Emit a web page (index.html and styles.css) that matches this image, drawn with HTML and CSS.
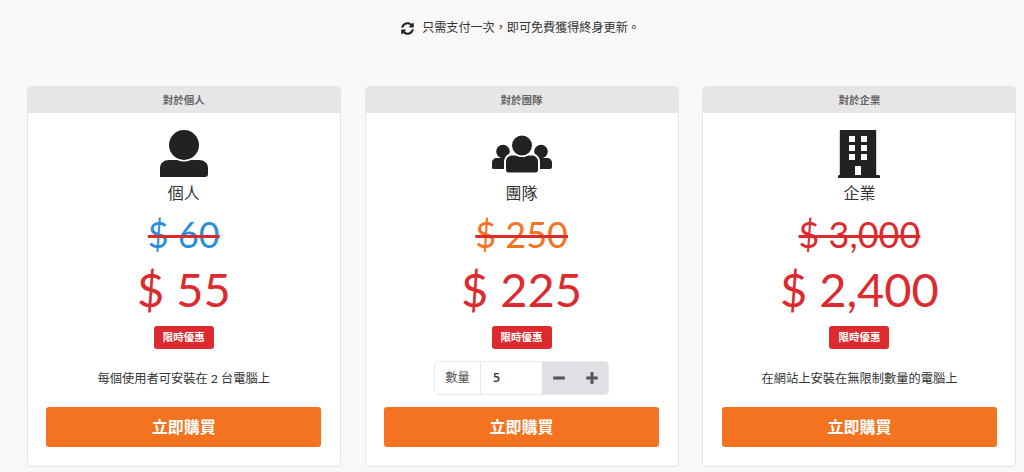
FILE: index.html
```html
<!DOCTYPE html>
<html>
    <head>
        <meta charset="utf-8"/>
        <link rel="stylesheet" href="styles.css">
    </head>
    <body>
        <p class="note">
            <svg class="note-icon" viewBox="0 0 512 512"><path d="M370.72 133.28C339.458 104.008 298.888 87.962 255.848 88c-77.458.068-144.328 53.178-162.791 126.85-1.344 5.363-6.122 9.15-11.651 9.15H24.103c-7.498 0-13.194-6.807-11.807-14.176C33.933 94.924 134.813 8 256 8c66.448 0 126.791 26.136 171.315 68.685L463.03 40.97C478.149 25.851 504 36.559 504 57.941V192c0 13.255-10.745 24-24 24H345.941c-21.382 0-32.09-25.851-16.971-40.971l41.75-41.749zM32 296h134.059c21.382 0 32.09 25.851 16.971 40.971l-41.75 41.75c31.262 29.273 71.835 45.319 114.876 45.28 77.418-.07 144.315-53.144 162.787-126.849 1.344-5.363 6.122-9.15 11.651-9.15h57.304c7.498 0 13.194 6.807 11.807 14.176C478.067 417.076 377.187 504 256 504c-66.448 0-126.791-26.136-171.315-68.685L48.97 471.03C33.851 486.149 8 475.441 8 454.059V320c0-13.255 10.745-24 24-24z"/></svg>
            只需支付一次，即可免費獲得終身更新。
        </p>

        <main class="plans">
            <section class="card">
                <div class="card-header">對於個人</div>
                <div class="card-body">
                    <svg class="plan-icon" viewBox="0 0 60 48">
                        <path d="M6 47V38C6 33 10 30 15 30H45C50 30 54 33 54 38V44C54 46 53 47 51 47Z"/>
                        <circle class="cut" cx="30" cy="15" r="16.5"/>
                        <circle cx="30" cy="15" r="15"/>
                    </svg>
                    <h2 class="plan-name">個人</h2>
                    <div class="old-price blue">$ 60</div>
                    <div class="new-price">$ 55</div>
                    <span class="badge">限時優惠</span>
                    <div class="plan-detail">每個使用者可安裝在 2 台電腦上</div>
                    <a class="buy">立即購買</a>
                </div>
            </section>

            <section class="card">
                <div class="card-header">對於團隊</div>
                <div class="card-body">
                    <svg class="plan-icon" viewBox="0 0 60 48">
                        <circle cx="11" cy="21.5" r="6.8"/>
                        <circle cx="49" cy="21.5" r="6.8"/>
                        <path d="M0 39V33C0 30 2 28 5 28H17C20 28 22 30 22 33V39H3C1 39 0 38.500 0 39Z"/>
                        <path d="M38 28H55C58 28 60 30 60 33V37C60 38 59 39 58 39H38Z"/>
                        <path class="cut" d="M12 44V32C12 27 16 23 21 23H39C44 23 48 27 48 32V44Z"/>
                        <path d="M14 40V31C14 28 17 25.500 20 25.500H40C43 25.500 46 28 46 31V40C46 41.500 45 42.500 43.500 42.500H16.500C15 42.500 14 41.500 14 40Z"/>
                        <circle class="cut" cx="30" cy="15.500" r="11.500"/>
                        <circle cx="30" cy="15.500" r="10"/>
                    </svg>
                    <h2 class="plan-name">團隊</h2>
                    <div class="old-price orange">$ 250</div>
                    <div class="new-price">$ 225</div>
                    <span class="badge">限時優惠</span>
                    <div class="plan-detail">
                        <div class="qty">
                            <span class="qty-label">數量</span>
                            <span class="qty-value">5</span>
                            <span class="qty-buttons">
                                <svg viewBox="0 0 12 12"><rect x="1" y="4.700" width="10" height="2.600"/></svg>
                                <svg viewBox="0 0 12 12"><rect x="1" y="4.700" width="10" height="2.600"/><rect x="4.700" y="1" width="2.600" height="10"/></svg>
                            </span>
                        </div>
                    </div>
                    <a class="buy">立即購買</a>
                </div>
            </section>

            <section class="card">
                <div class="card-header">對於企業</div>
                <div class="card-body">
                    <svg class="plan-icon" viewBox="0 0 60 48">
                        <path fill-rule="evenodd" d="M10.800 45V1C10.800 .4 11.200 0 11.800 0H46.200C46.800 0 47.200 .4 47.200 1V45H50C50.600 45 51 45.800 51 47V48H9V47C9 45.800 9.400 45 10 45ZM20 6V12H26V6ZM32 6V12H38V6ZM20 15V21H26V15ZM32 15V21H38V15ZM20 24V30H26V24ZM32 24V30H38V24ZM26 36V45H32V36Z"/>
                    </svg>
                    <h2 class="plan-name">企業</h2>
                    <div class="old-price red">$ 3,000</div>
                    <div class="new-price">$ 2,400</div>
                    <span class="badge">限時優惠</span>
                    <div class="plan-detail">在網站上安裝在無限制數量的電腦上</div>
                    <a class="buy">立即購買</a>
                </div>
            </section>
        </main>
    </body>
</html>
```

FILE: styles.css
```css
body {
    margin: 0;
    padding: 0;
    height: 472px;
    overflow: hidden;
    background: #f8f8f8;
    color: #333;
    font-family: Lato, "Noto Sans CJK TC", sans-serif;
}

.note {
    margin: 0;
    height: 86px;
    padding-top: 19px;
    padding-left: 17px;
    box-sizing: border-box;
    display: flex;
    justify-content: center;
    align-items: flex-start;
    gap: 8px;
    font-size: 12.100px;
    line-height: 18px;
}

.note-icon {
    width: 13px;
    height: 13px;
    margin-top: 3px;
    fill: #222;
}

.plans {
    display: grid;
    grid-template-columns: repeat(3, 314px);
    gap: 23.800px;
    padding-left: 26.800px;
}

.card {
    height: 381px;
    box-sizing: border-box;
    background: #fff;
    border: 1px solid #e6e6e6;
    border-radius: 4px;
    overflow: hidden;
}

.card-header {
    height: 26px;
    background: #e6e6e6;
    color: #666;
    font-size: 10.500px;
    font-weight: 700;
    line-height: 26px;
    text-align: center;
}

.card-body {
    display: flex;
    flex-direction: column;
    align-items: center;
    padding: 17px 18.500px 0;
}

.plan-icon {
    width: 60px;
    height: 48px;
    flex: none;
    fill: #222;
}

.plan-icon .cut {
    fill: #fff;
}

.plan-name {
    margin: 3px 0 0;
    font-size: 16px;
    font-weight: 400;
    line-height: 24px;
}

.old-price {
    margin-top: 7px;
    font-size: 36px;
    line-height: 44px;
    text-decoration: line-through;
    text-decoration-color: #dc2a2f;
    text-decoration-thickness: 3px;
}

.blue { color: #2b8fd8; }
.orange { color: #f5731e; }
.red { color: #dc2a2f; }

.new-price {
    margin-top: 2px;
    color: #dc2a2f;
    font-size: 47px;
    line-height: 63px;
}

.badge {
    margin-top: 5px;
    width: 60px;
    height: 23px;
    border-radius: 3px;
    background: #dc2a2f;
    color: #fff;
    font-size: 10.500px;
    font-weight: 700;
    line-height: 23px;
    text-align: center;
}

.plan-detail {
    height: 34px;
    margin-top: 12px;
    display: flex;
    align-items: center;
    font-size: 12.250px;
}

.qty {
    width: 175px;
    height: 34px;
    box-sizing: border-box;
    display: flex;
    border: 1px solid #e9e9e9;
    border-radius: 4px;
    overflow: hidden;
}

.qty-label {
    width: 45px;
    border-right: 1px solid #e9e9e9;
    color: #555;
    line-height: 32px;
    text-align: center;
}

.qty-value {
    width: 61px;
    padding-left: 12px;
    box-sizing: border-box;
    font-family: "Open Sans", sans-serif;
    font-weight: 600;
    line-height: 32px;
}

.qty-buttons {
    flex: 1;
    display: flex;
    align-items: center;
    justify-content: space-around;
    background: #dee0e3;
}

.qty-buttons svg {
    width: 14px;
    height: 14px;
    fill: #555;
}

.buy {
    align-self: stretch;
    margin-top: 12px;
    height: 40px;
    border-radius: 3px;
    background: #f47320;
    color: #fff;
    font-size: 16px;
    font-weight: 700;
    line-height: 40px;
    text-align: center;
}
```
